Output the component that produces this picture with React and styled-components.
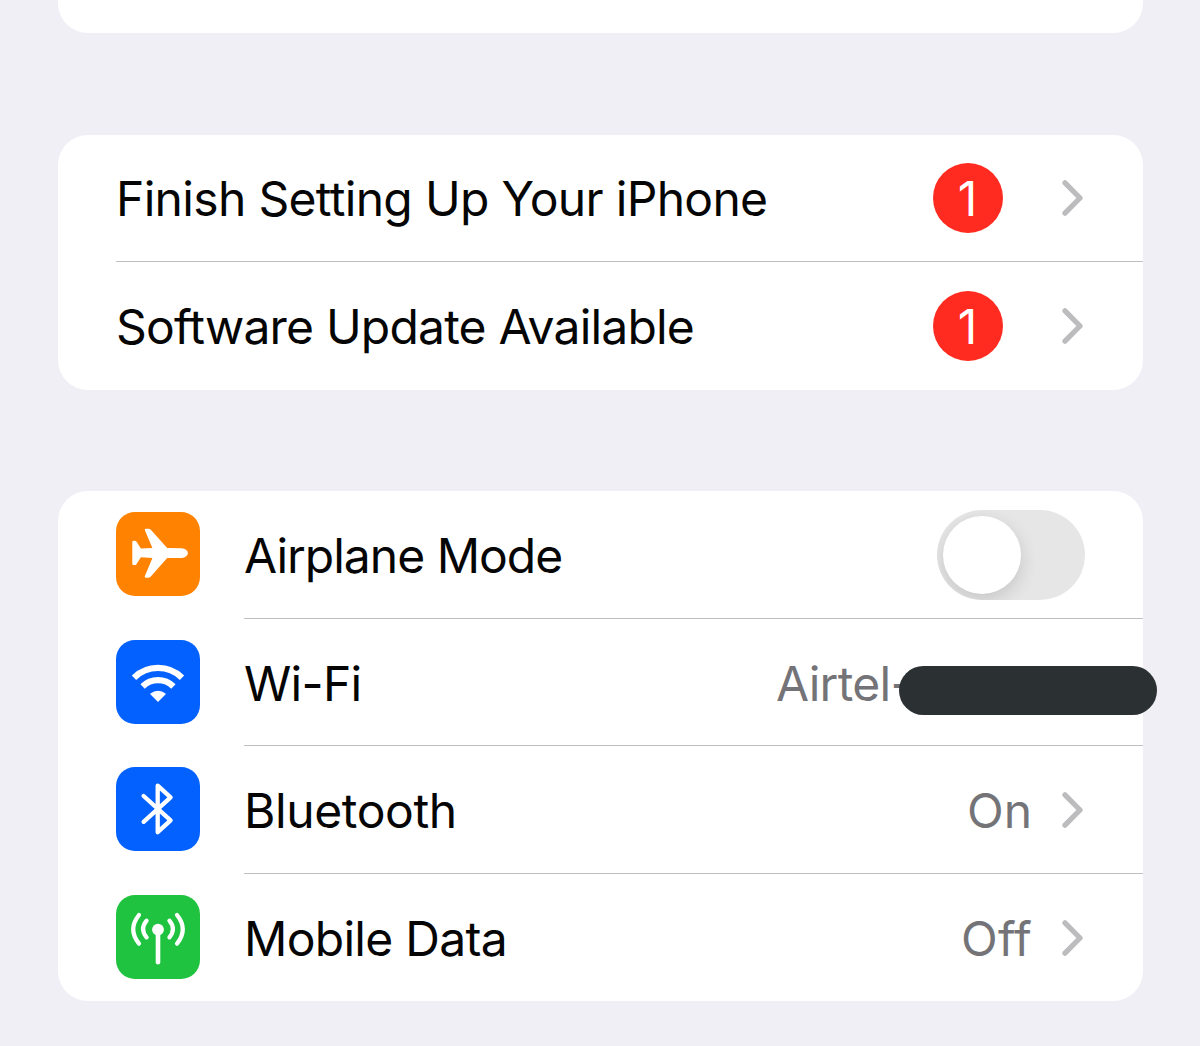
import React from 'react'
import styled, { createGlobalStyle } from 'styled-components'

const GlobalStyle = createGlobalStyle`
  * {
    box-sizing: border-box;
  }

  body {
    margin: 0;
    background: #f0eff6;
    overflow: hidden;
  }
`

const Page = styled.main`
  width: 1200px;
  height: 1046px;
  padding: 0 57px 0 58px;
  display: flex;
  flex-direction: column;
  gap: 101.5px;
  overflow: hidden;
  background: #f0eff6;
  font-family: Inter, 'Liberation Sans', sans-serif;
  font-size: 48px;
  color: #050505;
`

const Card = styled.section`
  flex: none;
  border-radius: 30px;
  background: #ffffff;
`

const CardEnd = styled.section`
  flex: none;
  height: 33px;
  border-radius: 0 0 30px 30px;
  background: #ffffff;
`

const Row = styled.div`
  height: 127.5px;
  padding-left: 58px;
  display: flex;
  align-items: center;
  gap: 44px;
`

const RowBody = styled.div`
  flex: 1;
  height: 100%;
  padding-top: ${(props) => props.$drop || '1px'};
  padding-right: 58px;
  display: flex;
  align-items: center;
  justify-content: space-between;
  border-bottom: ${(props) => (props.$last ? 'none' : '1px solid #bfbfc3')};
`

const Label = styled.span`
  padding-top: 1px;
  white-space: nowrap;
  letter-spacing: ${(props) => props.$tracking || '-0.7px'};
`

const Trailing = styled.div`
  padding-right: 1px;
  display: flex;
  align-items: center;
  gap: ${(props) => props.$gap || '30px'};
`

const Value = styled(Label)`
  color: #747478;
`

const Badge = styled.span`
  width: 70px;
  height: 70px;
  padding: 1px 1px 0 0;
  display: flex;
  align-items: center;
  justify-content: center;
  border-radius: 50%;
  background: #ff2a20;
  color: #ffffff;
`

const Tile = styled.div`
  width: 84px;
  height: 84px;
  margin-bottom: 0.6px;
  border-radius: 19px;
  overflow: hidden;
  background: ${(props) => props.$color};

  svg {
    display: block;
  }
`

const Switch = styled.div`
  width: 148px;
  height: 90px;
  padding: 6px;
  border-radius: 45px;
  overflow: hidden;
  background: #e6e6e7;
`

const Knob = styled.div`
  width: 78px;
  height: 78px;
  border-radius: 50%;
  background: #ffffff;
  box-shadow: 0 6px 18px rgba(0, 0, 0, 0.14);
`

const NetworkName = styled.div`
  position: relative;
  width: 309px;
  display: flex;
`

// covers the rest of the network name
const Redaction = styled.span`
  position: absolute;
  left: 123px;
  top: 13px;
  width: 258px;
  height: 49px;
  border-radius: 25px;
  background: #2b3033;
`

function Chevron() {
  return (
    <svg width="22" height="38" viewBox="0 0 22 38" fill="none">
      <path d="M3 3.8 L18 19 L3 34.2" stroke="#bcbcbe" strokeWidth="5.3" strokeLinecap="round" strokeLinejoin="round" />
    </svg>
  )
}

function PlaneIcon() {
  return (
    <svg width="84" height="84" viewBox="0 0 84 84">
      <path
        fill="#fff"
        d="M16.3 30 Q16.3 28.7 17.6 28.7 H18.8 Q19.8 28.7 20.4 29.6 L24.9 36.6 L36.4 36 L28.8 18 Q28.4 16.7 29.7 16.7 H32.6 Q33.9 16.7 34.8 17.7 L51.2 36 L65.8 36.2 C69 36.3 71.9 38.4 71.9 41.1 C71.9 43.8 69 45.8 65.8 45.9 L51.2 46.1 L34.8 64.6 Q33.9 65.7 32.6 65.7 H29.7 Q28.4 65.7 28.8 64.3 L36.4 46.1 L24.9 45.3 L20.4 52.2 Q19.8 53.1 18.8 53.1 H17.6 Q16.3 53.1 16.3 51.8 Z"
      />
    </svg>
  )
}

function WifiIcon() {
  return (
    <svg width="84" height="84" viewBox="0 0 84 84" fill="none">
      <g stroke="#fff" strokeWidth="6.2">
        <path d="M18 37.7 A34.3 34.3 0 0 1 66 37.7" />
        <path d="M26.6 46.5 A21.9 21.9 0 0 1 57.4 46.5" />
      </g>
      <path
        d="M35 54 A11 11 0 0 1 49 54 L42 61 Z"
        fill="#fff"
        stroke="#fff"
        strokeWidth="1.4"
        strokeLinejoin="round"
      />
    </svg>
  )
}

function BluetoothIcon() {
  return (
    <svg width="84" height="84" viewBox="0 0 84 84" fill="none">
      <path
        d="M27.6 29 L54.6 53.4 L41.7 65.2 V18.6 L54.6 30.4 L27.6 54.8"
        stroke="#fff"
        strokeWidth="4.3"
        strokeLinecap="round"
        strokeLinejoin="round"
      />
    </svg>
  )
}

function AntennaIcon() {
  return (
    <svg width="84" height="84" viewBox="0 0 84 84" fill="none">
      <circle cx="42" cy="34.6" r="5.9" fill="#fff" />
      <g stroke="#fff" strokeWidth="4.2" strokeLinecap="round">
        <path d="M42 35 V67.2" strokeWidth="4.6" />
        <path d="M30.6 25.6 Q23.6 34 30.6 42.4" />
        <path d="M23 20 Q11.4 34.3 23 48.6" />
        <path d="M53.4 25.6 Q60.4 34 53.4 42.4" />
        <path d="M61 20 Q72.6 34.3 61 48.6" />
      </g>
    </svg>
  )
}

const notices = [
  { title: 'Finish Setting Up Your iPhone', tracking: '-0.68px', count: 1 },
  { title: 'Software Update Available', tracking: '-0.8px', count: 1 },
]

function App() {
  return (
    <>
      <GlobalStyle />
      <Page>
        <CardEnd />

        <Card>
          {notices.map((notice, index) => (
            <Row key={notice.title}>
              <RowBody $last={index === notices.length - 1} $drop="0.5px">
                <Label $tracking={notice.tracking}>{notice.title}</Label>
                <Trailing $gap="59px">
                  <Badge>{notice.count}</Badge>
                  <Chevron />
                </Trailing>
              </RowBody>
            </Row>
          ))}
        </Card>

        <Card>
          <Row>
            <Tile $color="#ff8200"><PlaneIcon /></Tile>
            <RowBody $drop="1.4px">
              <Label $tracking="-1px">Airplane Mode</Label>
              <Switch><Knob /></Switch>
            </RowBody>
          </Row>
          <Row>
            <Tile $color="#0261ff"><WifiIcon /></Tile>
            <RowBody $drop="2px">
              <Label>Wi-Fi</Label>
              <NetworkName>
                <Value>Airtel-</Value>
                <Redaction />
              </NetworkName>
            </RowBody>
          </Row>
          <Row>
            <Tile $color="#0261ff"><BluetoothIcon /></Tile>
            <RowBody $drop="2px">
              <Label $tracking="-0.4px">Bluetooth</Label>
              <Trailing>
                <Value $tracking="0px">On</Value>
                <Chevron />
              </Trailing>
            </RowBody>
          </Row>
          <Row>
            <Tile $color="#20c340"><AntennaIcon /></Tile>
            <RowBody $last $drop="1px">
              <Label>Mobile Data</Label>
              <Trailing>
                <Value $tracking="0.2px">Off</Value>
                <Chevron />
              </Trailing>
            </RowBody>
          </Row>
        </Card>
      </Page>
    </>
  )
}

export default App
